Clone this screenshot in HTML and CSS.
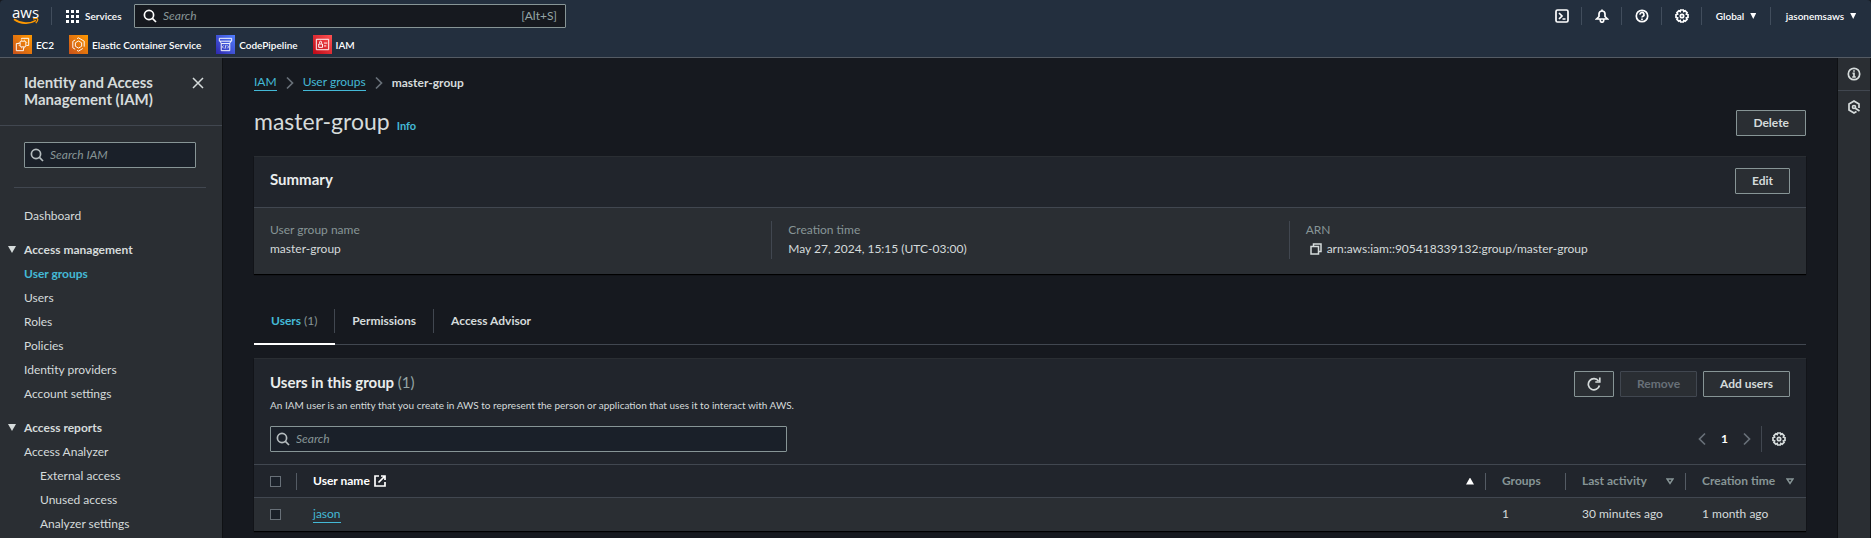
FILE: index.html
```html
<!DOCTYPE html>
<html lang="en">
<head>
<meta charset="utf-8">
<title>master-group | IAM | Global</title>
<link rel="stylesheet" href="styles.css">
</head>
<body>
<svg class="defs" aria-hidden="true">
  <defs>
    <linearGradient id="orange" x1="0" y1="1" x2="1" y2="0"><stop offset="0" stop-color="#c8511b"/><stop offset="1" stop-color="#ff9900"/></linearGradient>
    <linearGradient id="blue" x1="0" y1="1" x2="1" y2="0"><stop offset="0" stop-color="#2e27ad"/><stop offset="1" stop-color="#527fff"/></linearGradient>
    <linearGradient id="red" x1="0" y1="1" x2="1" y2="0"><stop offset="0" stop-color="#bd0816"/><stop offset="1" stop-color="#ff5252"/></linearGradient>
    <symbol id="search" viewBox="0 0 14 14"><circle cx="6" cy="6" r="4.6"/><path d="M9.4 9.4 13 13"/></symbol>
    <symbol id="gear" viewBox="0 0 14 14"><path d="M5.7 1h2.6l.5 1.500 1.400-.7 1.900 1.900-.7 1.400 1.600.6v2.600l-1.600.6.7 1.400-1.900 1.900-1.400-.7L8.300 13H5.700l-.5-1.500-1.400.7-1.900-1.900.7-1.400L1 8.300V5.700l1.600-.6-.7-1.400 1.900-1.900 1.400.7z"/><circle cx="7" cy="7" r="1.700"/></symbol>
    <symbol id="chevron" viewBox="0 0 8 14"><path d="M1 1.500 6.500 7 1 12.500"/></symbol>
  </defs>
</svg>

<header class="top">
  <div class="top-row">
    <a class="logo" href="#" aria-label="aws">
      <span class="logo-word">aws</span>
      <svg viewBox="0 0 26 7" fill="none" stroke="#f90" stroke-width="1.700"><path d="M1 1.200c7 5 15.500 5.200 22 1.200"/><path d="M20 .9c2-.6 4-.5 4.500 0s-.2 2.500-1.700 4.200" stroke-width="1.300"/></svg>
    </a>
    <button class="services" type="button">
      <svg viewBox="0 0 13 13" fill="#fff"><path d="M0 0h3v3H0zM5 0h3v3H5zM10 0h3v3h-3zM0 5h3v3H0zM5 5h3v3H5zM10 5h3v3h-3zM0 10h3v3H0zM5 10h3v3H5zM10 10h3v3h-3z"/></svg>
      Services
    </button>
    <label class="field top-search">
      <svg class="icon"><use href="#search"/></svg>
      <input type="text" placeholder="Search" aria-label="Search services">
      <span class="hint">[Alt+S]</span>
    </label>
    <nav class="tools">
      <button type="button" aria-label="CloudShell"><svg class="icon" viewBox="0 0 14 14"><rect x="1" y="1" width="12" height="12" rx="1.500"/><path d="m4 4 3 3-3 3M7.500 10H10.500"/></svg></button>
      <button type="button" aria-label="Notifications"><svg class="icon" viewBox="0 0 14 14"><path d="M1.500 10 4 7.500V5a3 3 0 0 1 6 0v2.500l2.500 2.500zM7 .5V2M5.300 10.500v1a1.700 1.700 0 0 0 3.400 0v-1"/></svg></button>
      <button type="button" aria-label="Help"><svg class="icon" viewBox="0 0 14 14"><circle cx="7" cy="7" r="5.700"/><path d="M5 5.600a2 2 0 1 1 3 1.600c-.7.4-1 .7-1 1.300M7 9.500V11"/></svg></button>
      <button type="button" aria-label="Settings"><svg class="icon"><use href="#gear"/></svg></button>
      <button type="button" class="menu region">Global <i class="tri"></i></button>
      <button type="button" class="menu">jasonemsaws <i class="tri"></i></button>
    </nav>
  </div>
  <nav class="favorites">
    <a href="#"><svg viewBox="0 0 20 20"><rect width="20" height="20" fill="url(#orange)"/><g fill="none" stroke="#fff"><path d="M7 9H3.500v7.500H11V13M9 4.500V3.500h7.500V11h-2"/><rect x="7.500" y="6.500" width="6" height="6" rx="1"/><path d="M9 5v1M12 5v1M9 13v1M12 13v1M6 8h1M6 11h1M14 8h1M14 11h1" stroke-width=".8"/></g></svg>EC2</a>
    <a href="#"><svg viewBox="0 0 20 20"><rect width="20" height="20" fill="url(#orange)"/><g fill="none" stroke="#fff"><path d="m10 6.300 3.300 1.900v3.700L10 13.800l-3.300-1.900V8.200z"/><path d="M8.500 3.800 10 3l6 3.500v5.800M14.500 14.200 10 17l-1.500-.8M6.500 15 4 13.500V6.700l2.500-1.500"/></g></svg>Elastic Container Service</a>
    <a href="#"><svg viewBox="0 0 20 20"><rect width="20" height="20" fill="url(#blue)"/><g fill="none" stroke="#fff"><path d="M3.500 3.500h13v3h-13zM4.500 6.500 5.500 9h9l1-2.500M5.500 9v7.500h9V9" /><path d="m8 11-1.300 1.500L8 14M12 11l1.300 1.500L12 14M10.500 10.500l-1 4" stroke-width=".8"/></g></svg>CodePipeline</a>
    <a href="#"><svg viewBox="0 0 20 20"><rect width="20" height="20" fill="url(#red)"/><g fill="none" stroke="#fff"><path d="M3.500 4.500h13v11h-13z"/><path d="M6 9.500h4V13H6zM7 9V7.500a1 1 0 0 1 2 0V9M11.500 8.500h3.500M11.500 11.500H14"/></g></svg>IAM</a>
  </nav>
</header>

<div class="shell">
  <aside class="side">
    <div class="side-head">
      <h2>Identity and Access Management (IAM)</h2>
      <button type="button" aria-label="Close navigation"><svg viewBox="0 0 12 12"><path d="m1 1 10 10M11 1 1 11"/></svg></button>
    </div>
    <div class="side-search">
      <label class="field">
        <svg class="icon"><use href="#search"/></svg>
        <input type="text" placeholder="Search IAM" aria-label="Search IAM">
      </label>
    </div>
    <nav class="side-nav">
      <a href="#">Dashboard</a>
      <button type="button" class="group"><i class="tri"></i>Access management</button>
      <a href="#" class="current">User groups</a>
      <a href="#">Users</a>
      <a href="#">Roles</a>
      <a href="#">Policies</a>
      <a href="#">Identity providers</a>
      <a href="#">Account settings</a>
      <button type="button" class="group"><i class="tri"></i>Access reports</button>
      <a href="#">Access Analyzer</a>
      <a href="#" class="nested">External access</a>
      <a href="#" class="nested">Unused access</a>
      <a href="#" class="nested">Analyzer settings</a>
    </nav>
  </aside>

  <main class="main">
    <nav class="crumbs" aria-label="Breadcrumbs">
      <a href="#">IAM</a>
      <svg class="chev"><use href="#chevron"/></svg>
      <a href="#">User groups</a>
      <svg class="chev"><use href="#chevron"/></svg>
      <span>master-group</span>
    </nav>
    <div class="page-head">
      <h1>master-group</h1>
      <a href="#" class="info">Info</a>
      <button type="button" class="btn">Delete</button>
    </div>

    <section class="card">
      <div class="card-head">
        <h2>Summary</h2>
        <button type="button" class="btn">Edit</button>
      </div>
      <dl class="facts">
        <div><dt>User group name</dt><dd>master-group</dd></div>
        <div><dt>Creation time</dt><dd>May 27, 2024, 15:15 (UTC-03:00)</dd></div>
        <div><dt>ARN</dt><dd class="arn"><svg viewBox="0 0 12 12"><path d="M3.500 3.500V1H11v7.500H8.500"/><path d="M1 3.500h7.500V11H1z"/></svg>arn:aws:iam::905418339132:group/master-group</dd></div>
      </dl>
    </section>

    <div class="tabs" role="tablist">
      <button type="button" role="tab" class="active" aria-selected="true"><span>Users <small>(1)</small></span></button>
      <button type="button" role="tab"><span>Permissions</span></button>
      <button type="button" role="tab"><span>Access Advisor</span></button>
    </div>

    <section class="card">
      <div class="list-head">
        <div>
          <h2>Users in this group <small>(1)</small></h2>
          <p>An IAM user is an entity that you create in AWS to represent the person or application that uses it to interact with AWS.</p>
        </div>
        <div class="actions">
          <button type="button" class="btn refresh" aria-label="Refresh"><svg viewBox="0 0 14 14"><path d="M12.400 8.500A5.600 5.600 0 1 1 11.500 4"/><path d="M12.800 0.500V5H8.300"/></svg></button>
          <button type="button" class="btn" disabled>Remove</button>
          <button type="button" class="btn">Add users</button>
        </div>
      </div>
      <div class="filter">
        <label class="field">
          <svg class="icon"><use href="#search"/></svg>
          <input type="text" placeholder="Search" aria-label="Search users">
        </label>
        <div class="pager">
          <button type="button" aria-label="Previous page"><svg class="chev prev"><use href="#chevron"/></svg></button>
          <b>1</b>
          <button type="button" aria-label="Next page"><svg class="chev"><use href="#chevron"/></svg></button>
          <button type="button" class="prefs" aria-label="Preferences"><svg class="icon"><use href="#gear"/></svg></button>
        </div>
      </div>
      <table>
        <colgroup><col class="c-check"><col><col class="c-groups"><col class="c-time"><col class="c-time"></colgroup>
        <thead>
          <tr>
            <th><div class="cell check"><input type="checkbox" aria-label="Select all users"></div></th>
            <th><div class="cell name">User name <svg viewBox="0 0 12 12"><path d="M5 1H1v10h10V7M7 1h4v4M11 1 4.500 7.500"/></svg><i class="tri up"></i></div></th>
            <th><div class="cell">Groups</div></th>
            <th><div class="cell">Last activity <svg class="sort" viewBox="0 0 8 7"><path d="M1 1h6L4 5.500z"/></svg></div></th>
            <th><div class="cell">Creation time <svg class="sort" viewBox="0 0 8 7"><path d="M1 1h6L4 5.500z"/></svg></div></th>
          </tr>
        </thead>
        <tbody>
          <tr>
            <td><div class="cell check"><input type="checkbox" aria-label="Select jason"></div></td>
            <td><div class="cell"><a href="#">jason</a></div></td>
            <td><div class="cell">1</div></td>
            <td><div class="cell">30 minutes ago</div></td>
            <td><div class="cell">1 month ago</div></td>
          </tr>
        </tbody>
      </table>
    </section>
  </main>

  <aside class="rail">
    <button type="button" aria-label="Info panel"><svg class="icon" viewBox="0 0 14 14"><circle cx="7" cy="7" r="5.700"/><path d="M7 3.200v1.600M5.500 6.300H7V10M5.200 10h3.600"/></svg></button>
    <button type="button" aria-label="Diagnostics"><svg class="icon" viewBox="0 0 14 14"><path d="M12 8V4L7 1 2 4v6l5 3 2.500-1.500"/><circle cx="7" cy="7" r="1.500"/><path d="m8 8 4.500 3"/></svg></button>
  </aside>
</div>
</body>
</html>
```

FILE: styles.css
```css
* { box-sizing: border-box; }

body {
  margin: 0;
  min-height: 100vh;
  display: flex;
  flex-direction: column;
  overflow: hidden;
  background: #16191f;
  color: #d5dbdb;
  font: 12px/16px Lato, "Open Sans", sans-serif;
}

h1, h2, p, dl, dd { margin: 0; }
a { color: inherit; text-decoration: none; }
button { padding: 0; border: 0; background: none; color: inherit; font: inherit; }
svg { flex: none; }
.defs { position: absolute; width: 0; height: 0; }

.icon { width: 14px; height: 14px; fill: none; stroke: currentColor; stroke-width: 1.700; }
.chev { width: 8px; height: 14px; fill: none; stroke: #687078; stroke-width: 1.700; }
.prev { transform: scaleX(-1); }
.tri { width: 8px; height: 7px; background: currentColor; clip-path: polygon(0 0, 100% 0, 50% 100%); }
.tri.up { clip-path: polygon(50% 0, 100% 100%, 0 100%); }

.field {
  display: flex;
  align-items: center;
  gap: 6px;
  height: 26px;
  padding: 0 5px;
  border: 1px solid #879596;
  border-radius: 1px;
  background: #1a2029;
  color: #b5bcbe;
}
.field input { flex: 1; min-width: 0; padding: 0; border: 0; outline: 0; background: none; color: #d5dbdb; font: inherit; }
.field input::placeholder { color: #879596; font-style: italic; opacity: 1; }

/* Global header */
.top { background: #232f3e; border-bottom: 1px solid #545b64; border-radius: 4px 4px 0 0; color: #fff; font-size: 10px; font-weight: 600; }
.top-row { display: flex; align-items: center; height: 32px; }
.logo { display: flex; flex-direction: column; align-items: center; width: 52px; height: 18px; border-right: 1px solid #414d5c; }
.logo-word { font: 500 15px/11px "Open Sans", sans-serif; }
.logo svg { width: 26px; height: 7px; }
.services { display: flex; align-items: center; gap: 6px; width: 82px; padding-left: 14px; }
.services svg { width: 13px; height: 13px; }
.top-search { width: 432px; height: 24px; background: #16191f; color: #fff; font-size: 12px; font-weight: 400; padding: 0 8px; }
.hint { color: #95a5a6; }
.tools { display: flex; align-items: center; margin-left: auto; }
.tools button { display: flex; align-items: center; justify-content: center; gap: 6px; width: 40px; height: 18px; border-right: 1px solid #414d5c; }
.tools .region { width: 69px; }
.tools .menu:last-child { width: 100px; border: 0; }
.tools .tri { width: 6px; height: 6px; }
.favorites { display: flex; gap: 15px; height: 25px; padding: 3px 13px 0; }
.favorites a { display: flex; align-items: center; gap: 4px; height: 19px; }
.favorites svg { width: 19px; height: 19px; }

.shell { display: flex; flex: 1; }

/* Service navigation */
.side { width: 223px; background: #2a2e33; border-right: 1px solid #0f1114; }
.side-head { display: flex; justify-content: space-between; align-items: flex-start; height: 68px; padding: 16px 18px 0 24px; border-bottom: 1px solid #414750; }
.side-head h2 { width: 150px; font-size: 15px; line-height: 17px; }
.side-head svg { width: 12px; height: 12px; margin-top: 3px; fill: none; stroke: #d5dbdb; stroke-width: 1.500; }
.side-search { margin: 0 16px 0 14px; padding: 16px 10px 19px; border-bottom: 1px solid #414750; }
.side-nav { display: flex; flex-direction: column; align-items: flex-start; padding: 16px 8px 0; }
.side-nav a { padding: 0 16px; line-height: 24px; }
.side-nav .current { color: #44b9d6; font-weight: 700; }
.side-nav .nested { padding-left: 32px; }
.side-nav .group { display: flex; align-items: center; gap: 8px; margin-top: 9px; font-weight: 700; line-height: 25px; }

/* Page content */
.main { flex: 1; min-width: 0; padding: 16px 31px 0; }
.crumbs { display: flex; align-items: center; gap: 9px; }
.crumbs a, td a { color: #44b9d6; border-bottom: 1px solid #44b9d6; }
.crumbs span { font-weight: 700; }
.page-head { display: flex; align-items: center; gap: 7px; height: 36px; margin: 14px 0 15px; }
.page-head h1 { padding-bottom: 4px; font-size: 23px; font-weight: 400; line-height: 28px; }
.page-head .btn { margin-left: auto; }
.info { padding-top: 5px; color: #44b9d6; font-size: 11px; font-weight: 700; }

.btn { display: flex; align-items: center; justify-content: center; height: 26px; padding: 0 16px; border: 1px solid #879596; border-radius: 1px; background: #2a2e33; font-weight: 700; }
.btn:disabled { border-color: #414750; color: #687078; }
.refresh { width: 40px; padding: 0; }
.refresh svg { width: 14px; height: 14px; fill: none; stroke: #d5dbdb; stroke-width: 1.700; }

.card { background: #2a2e33; border-top: 1px solid #2a2e33; box-shadow: 0 1px 1px #000; }
.card h2 { color: #eaeded; font-size: 15px; line-height: 22px; }
.card small { color: #95a5a6; font-size: inherit; font-weight: 400; }
.card-head { display: flex; justify-content: space-between; height: 51px; padding: 11px 16px; background: #21252c; border-bottom: 1px solid #414750; }
.facts { display: grid; grid-template-columns: repeat(3, 1fr); padding: 13px 0 15px; }
.facts > div { height: 38px; padding-left: 16px; border-left: 1px solid #414750; }
.facts > div:first-child { border-left: 0; }
.facts dt { color: #879596; line-height: 18px; }
.facts dd { line-height: 20px; }
.arn { display: flex; align-items: center; gap: 5px; padding-left: 4px; }
.arn svg { width: 12px; height: 12px; fill: none; stroke: #d5dbdb; stroke-width: 1.500; }

.tabs { display: flex; height: 38px; margin: 33px 0 13px; border-bottom: 1px solid #414750; }
.tabs button { height: 38px; padding-bottom: 8px; font-weight: 700; border-bottom: 2px solid transparent; }
.tabs span { display: block; padding: 4px 17px; border-right: 1px solid #414750; }
.tabs button:last-child span { border: 0; }
.tabs .active { border-color: #fff; color: #44b9d6; }
.tabs small { color: #879596; font-size: inherit; font-weight: 400; }

.list-head { display: flex; justify-content: space-between; padding: 12px 16px 0; background: #21252c; }
.list-head p { margin-top: 4px; font-size: 10px; line-height: 16px; }
.actions { display: flex; gap: 6px; }
.filter { display: flex; justify-content: space-between; align-items: center; padding: 13px 16px 12px; background: #21252c; }
.filter .field { flex: 0 1 34%; }
.pager { display: flex; align-items: center; gap: 15px; height: 26px; }
.pager button { display: flex; }
.pager b { color: #fff; }
.prefs { align-items: center; height: 26px; margin-left: -5px; padding: 0 4px 0 10px; border-left: 1px solid #414750; }
.pager .prefs { padding: 0 4px 0 10px; }

table { width: 100%; table-layout: fixed; border-collapse: collapse; text-align: left; }
.c-check { width: 43px; }
.c-groups { width: 80px; }
.c-time { width: 120px; }
th, td { height: 33px; padding: 0; border-top: 1px solid #414750; }
thead { background: #21252c; color: #879596; }
.cell { display: flex; align-items: center; justify-content: space-between; height: 17px; padding: 0 11px 0 16px; border-right: 1px solid transparent; }
th .cell { border-color: #545b64; }
th:last-child .cell { border-color: transparent; }
.name { color: #fff; justify-content: flex-start; gap: 4px; }
.name svg { width: 12px; height: 12px; fill: none; stroke: #fff; stroke-width: 1.700; }
.name .tri { margin-left: auto; }
.sort { width: 8px; height: 7px; fill: none; stroke: #879596; stroke-width: 1.500; }
.check input { appearance: none; width: 11px; height: 11px; margin: 0; border: 1px solid #687078; background: #1a2029; }

.rail { display: flex; flex-direction: column; width: 34px; background: #2a2e33; border: solid #0f1114; border-width: 0 1px; }
.rail button { display: flex; align-items: center; justify-content: center; height: 32px; }
.rail button + button { height: 33px; border-top: 1px solid #414750; }
```
